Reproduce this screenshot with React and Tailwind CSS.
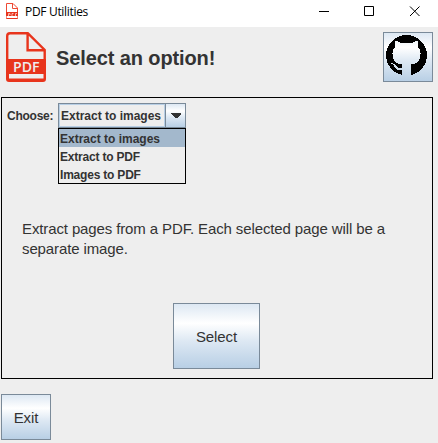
import React from "react";

const metal =
  "border border-[#7a8a99] bg-[linear-gradient(180deg,#dde8f3_0%,#ffffff_30%,#dde8f3_58%,#b8cfe5_100%)]";

function PdfIcon({ className }) {
  return (
    <svg viewBox="0 0 40 50" className={className}>
      <path d="M1.2 28V4Q1.2 1.2 4 1.2H21.8L38.7 18V28M21.6 1.2V18.2H38.5" fill="none" stroke="#e8341c" strokeWidth="2.4" />
      <path fillRule="evenodd" d="M0 27H40V47Q40 50 37 50H3Q0 50 0 47ZM3 42V46.5H37.5V42Z" fill="#e8341c" />
      <text x="7" y="40" textLength="26.5" lengthAdjust="spacingAndGlyphs" fontSize="15" fontFamily="Open Sans, sans-serif" fontWeight="600" fill="#eeeeee">PDF</text>
    </svg>
  );
}

function SmallPdfIcon() {
  return (
    <svg viewBox="0 0 12 16" className="ml-[6px] mt-[3px] h-4 w-3">
      <path d="M0.5 9V0.5H7L11.5 5V9M6.5 0.5V5.5H11.5" fill="none" stroke="#ee4a35" />
      <path d="M0 9H12V13H0ZM0 15H12V16H0Z" fill="#e8341c" />
      <path d="M0.5 13V15.5M11.5 13V15.5" stroke="#ee8a7c" />
      <path d="M2.5 13V10.5H4V12M6 13V10.5H7.5M9.5 13V10.5H11" fill="none" stroke="#fbd5cf" strokeWidth="0.8" />
    </svg>
  );
}

function GithubMark() {
  return (
    <svg viewBox="0 0 16 16" className="h-[41px] w-[41px]" shapeRendering="crispEdges">
      <path d="M8 0C3.58 0 0 3.58 0 8c0 3.4 2.2 6.4 5.9 7.5H6.2V13.8C4.4 14 3.7 13.1 3.2 12.2 2.9 11.7 2.4 11.4 2 11.1 2.8 10.9 3.5 11.4 3.9 12.1 4.5 13 5.3 13 6.2 12.7V11.5C4 11.2 2.5 10.2 2.5 7.3c0-1.1.4-2 1-2.7C3.2 3.8 3.3 3 3.6 2.3c.9 0 1.7.5 2.4 1 1.3-.3 2.7-.3 4 0 .8-.5 1.5-1 2.4-1 .4.8.4 1.6.1 2.3.7.7 1 1.6 1 2.7 0 2.9-1.5 3.9-3.7 4.2V15.5H10.4C13.8 14.3 16 11.5 16 8c0-4.42-3.58-8-8-8z" />
    </svg>
  );
}

function TitleBar() {
  return (
    <div className="flex h-[27px] items-start bg-white">
      <SmallPdfIcon />
      <span className="ml-[7px] mt-[3px] font-['Open_Sans',sans-serif] text-[12px] leading-[17px] tracking-[-0.32px] text-black">PDF Utilities</span>
      <svg viewBox="0 0 110 22" className="ml-auto mr-[15px] h-[22px] w-[110px] shrink-0" fill="none" stroke="#000">
        <path d="M6 11.5H16M51.5 6.5H60.5V15.5H51.5Z" />
        <path d="M97 6.5L106.5 16M106.5 6.5L97 16" />
      </svg>
    </div>
  );
}

export default function App() {
  return (
    <div className="h-[443px] w-[438px] overflow-hidden bg-[#eeeeee] font-['Liberation_Sans',Arial,sans-serif] text-[#333333]">
      <TitleBar />
      <header className="flex h-[70px] items-start pl-[6px] pr-[5px] pt-[5px]">
        <PdfIcon className="h-[50px] w-10" />
        <h1 className="ml-[10px] mt-[14px] text-[20px] font-bold leading-6 tracking-[-0.11px]">Select an option!</h1>
        <button className={"ml-auto flex h-[50px] w-[50px] items-start pl-[2px] pt-[2px] " + metal}>
          <GithubMark />
        </button>
      </header>
      <main className="ml-px flex h-[282px] w-[432px] flex-col border border-black">
        <div className="flex items-start pl-[5px] pt-[5px] text-[12px] font-bold">
          <span className="mt-[6px] w-[51px] leading-[14px] tracking-[-0.25px]">Choose:</span>
          <div className="w-[128px]">
            <div className="flex h-[25px] border border-[#7a8a99]">
              <div className="flex-1 whitespace-nowrap border border-[#b8cfe5] pl-px pt-[4px] leading-[14px]">Extract to images</div>
              <div className="flex w-5 items-center justify-center border-l border-[#7a8a99] bg-[linear-gradient(180deg,#dde8f3_0%,#ffffff_30%,#dde8f3_58%,#b8cfe5_100%)]">
                <svg viewBox="0 0 10 5" className="h-[5px] w-[10px]" shapeRendering="crispEdges">
                  <path d="M0 0H10V1L6 5H4L0 1Z" fill="#333333" />
                </svg>
              </div>
            </div>
            <ul className="h-14 border border-black pl-0 leading-[20px]">
              <li className="h-[18px] bg-[#a3b8cc] pl-px">Extract to images</li>
              <li className="h-[18px] pl-px tracking-[-0.2px]">Extract to PDF</li>
              <li className="h-[18px] pl-px tracking-[-0.2px]">Images to PDF</li>
            </ul>
          </div>
        </div>
        <p className="ml-5 mt-[35px] h-[84px] w-[380px] text-[15px] leading-5 tracking-[-0.12px]">
          Extract pages from a PDF. Each selected page will be a separate image.
        </p>
        <button className={"ml-[171px] h-[66px] w-[87px] pt-[3px] text-[15px] tracking-[-0.1px] " + metal}>Select</button>
      </main>
      <button className={"ml-px mt-[15px] block h-[46px] w-[50px] pt-[3px] text-[15px] tracking-[-0.1px] " + metal}>Exit</button>
    </div>
  );
}
